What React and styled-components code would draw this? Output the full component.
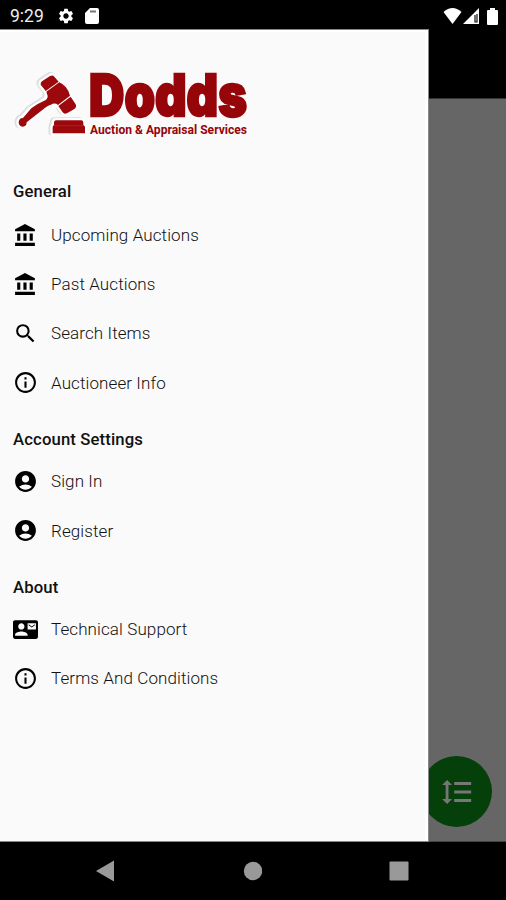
import React from 'react'
import styled, { createGlobalStyle } from 'styled-components'
import {
    MdSearch,
    MdInfoOutline,
    MdAccountCircle,
    MdContactMail,
    MdFormatLineSpacing,
    MdSettings
} from 'react-icons/md'

const GlobalStyle = createGlobalStyle`
    * {
        box-sizing: border-box;
    }
    body {
        margin: 0;
        background-color: #000;
        font-family: Roboto, "Liberation Sans", sans-serif;
    }
`

const Phone = styled.div`
    display: flex;
    flex-direction: column;
    width: 506px;
    height: 900px;
    overflow: hidden;
    background-color: #000;
`

const StatusBar = styled.header`
    display: flex;
    align-items: center;
    height: 29px;
    padding: 3px 8px 0 10px;
    color: #fff;
`

const Clock = styled.span`
    width: 47px;
    font-size: 17.5px;
    line-height: 20px;
    color: #eee;
`

const StatusIcons = styled.div`
    display: flex;
    align-items: center;
    gap: ${props => props.gap};
    margin-left: ${props => props.right ? 'auto' : '0'};
`

const Content = styled.main`
    display: flex;
    height: 813px;
`

const Drawer = styled.nav`
    width: 429px;
    padding: 32px 13px 0;
    background-color: #fafafa;
    border: 1px solid #888;
    border-left: none;
    box-shadow: inset -3px 2px 0 #fff;
`

const Logo = styled.svg`
    display: block;
    width: 240px;
    height: 82px;
    margin-bottom: 17px;
    overflow: visible;
`

const SectionTitle = styled.h2`
    height: 49.5px;
    margin: 0;
    padding-top: ${props => props.first ? '21px' : '22.4px'};
    font-size: 16.7px;
    font-weight: 500;
    line-height: 20px;
    letter-spacing: 0.13px;
    color: #111;
`

const MenuItem = styled.a`
    display: flex;
    align-items: center;
    gap: 13px;
    height: 49.2px;
    font-size: 17px;
    font-weight: 300;
    letter-spacing: 0.1px;
    color: #111;
    svg {
        color: #000;
    }
`

const Backdrop = styled.section`
    position: relative;
    flex: 1;
    background-color: #666;
    border-bottom: 1px solid #444;
`

const AppBar = styled.div`
    height: 70px;
    background-color: #000;
    border-bottom: 1px solid #333;
`

const FabClip = styled.div`
    position: absolute;
    right: 0;
    bottom: 14px;
    width: 77px;
    height: 71px;
    overflow: hidden;
`

const Fab = styled.button`
    position: absolute;
    right: 14px;
    top: 0;
    display: flex;
    align-items: center;
    justify-content: center;
    width: 71px;
    height: 71px;
    padding: 0;
    border: none;
    border-radius: 50%;
    background-color: #053f09;
    color: #777;
`

const NavBar = styled.footer`
    display: flex;
    justify-content: space-between;
    align-items: center;
    height: 58px;
    padding: 0 97px 0 96px;
`

const BankIcon = () => (
    <svg width="25" height="25" viewBox="0 0 24 24" fill="currentColor">
        <path d="M4 10v7h3v-7H4zm6 0v7h3v-7h-3zM2 22h19v-3H2v3zm14-12v7h3v-7h-3zm-4.5-9L2 6v2h19V6l-9.5-5z" />
    </svg>
)

const sections = [
    {
        title: 'General',
        items: [
            { label: 'Upcoming Auctions', Icon: BankIcon },
            { label: 'Past Auctions', Icon: BankIcon },
            { label: 'Search Items', Icon: MdSearch },
            { label: 'Auctioneer Info', Icon: MdInfoOutline }
        ]
    },
    {
        title: 'Account Settings',
        items: [
            { label: 'Sign In', Icon: MdAccountCircle },
            { label: 'Register', Icon: MdAccountCircle }
        ]
    },
    {
        title: 'About',
        items: [
            { label: 'Technical Support', Icon: MdContactMail },
            { label: 'Terms And Conditions', Icon: MdInfoOutline }
        ]
    }
]

const gavelOutline = 'M92 62Q91 56 96 52L119 37Q128 31 133 38L145 53L172 74L182 97L197 121Q201 130 192 136L172 147Q163 152 158 145L145 125L120 122L98 136L50 175Q48 188 38 188Q26 188 26 175Q27 164 38 160L62 134L108 105L112 88Z'
const blockOutline = 'M138 169H214Q219 169 220 175V184Q225 185 225 190V208H128V190Q128 185 132 184V175Q133 169 138 169Z'

const Gavel = () => (
    <g transform="translate(-3 2) scale(0.3333)">
        <g fill="#dadede" stroke="#dadede" strokeWidth="15" strokeLinejoin="round" transform="translate(-5 -2)">
            <path d={gavelOutline} />
            <path d={blockOutline} />
        </g>
        <g fill="#fff" stroke="#fff" strokeWidth="14" strokeLinejoin="round">
            <path d={gavelOutline} />
            <path d={blockOutline} />
        </g>
        <g fill="#9d080d">
            <path d="M92 62Q91 56 96 52L119 37Q128 31 133 38L146 53L107 81Z" />
            <path d="M109 83L148 55Q173 66 180 95L144 123Q134 115 123 122Q114 123 98 137L50 175Q50 188 38 188Q26 187 26 175Q27 162 39 162L64 133Q82 119 100 112Q114 106 113 96Z" />
            <path d="M145 126L182 98L197 121Q201 130 192 136L172 147Q163 152 158 145Z" />
            <path d="M138 169H214Q219 169 220 175V184Q225 185 225 190V208H128V190Q128 185 132 184V175Q133 169 138 169Z" />
        </g>
        <path d="M131 185H221" stroke="#b42a2e" strokeWidth="2" />
    </g>
)

class App extends React.Component {
    render() {
        return (
            <Phone>
                <GlobalStyle />
                <StatusBar>
                    <Clock>9:29</Clock>
                    <StatusIcons gap="10px">
                        <MdSettings size={18} />
                        <svg width="14" height="16" viewBox="0 0 14 16">
                            <path d="M5 0H12Q14 0 14 2V14Q14 16 12 16H2Q0 16 0 14V5Z" fill="#fff" />
                            <path d="M5 2.5H11V4.5H5Z" fill="#777" />
                        </svg>
                    </StatusIcons>
                    <StatusIcons gap="1px" right>
                        <svg width="19" height="16" viewBox="0 0 19 16">
                            <path d="M0.5 4Q9.5 -4 18.5 4L9.5 16Z" fill="#fff" />
                        </svg>
                        <svg width="23" height="16" viewBox="0 0 23 16">
                            <path d="M16 0V16H0Z" fill="#fff" />
                            <path d="M12 7V14H14V6" fill="none" stroke="#111" strokeWidth="1.2" />
                        </svg>
                        <svg width="11" height="17" viewBox="0 0 11 17">
                            <path d="M3 2V0H8V2H10Q11 2 11 3V16Q11 17 10 17H1Q0 17 0 16V3Q0 2 1 2Z" fill="#fff" />
                        </svg>
                    </StatusIcons>
                </StatusBar>
                <Content>
                    <Drawer>
                        <Logo viewBox="0 0 240 82" role="img">
                            <Gavel />
                            <g fill="#960509" stroke="#960509">
                                <text x="76" y="54" fontFamily="Inter, sans-serif" fontSize="57.5" fontWeight="900" strokeWidth="2.4" textLength="158" lengthAdjust="spacingAndGlyphs">Dodds</text>
                                <text x="77" y="72" fontFamily="Roboto, sans-serif" fontSize="12.8" fontWeight="700" stroke="none" textLength="157" lengthAdjust="spacingAndGlyphs">Auction &amp; Appraisal Services</text>
                            </g>
                        </Logo>
                        {sections.map(({ title, items }, index) => (
                            <React.Fragment key={title}>
                                <SectionTitle first={index === 0}>{title}</SectionTitle>
                                {items.map(({ label, Icon }) => (
                                    <MenuItem key={label}>
                                        <Icon size={25} />
                                        <span>{label}</span>
                                    </MenuItem>
                                ))}
                            </React.Fragment>
                        ))}
                    </Drawer>
                    <Backdrop>
                        <AppBar />
                        <FabClip>
                            <Fab>
                                <MdFormatLineSpacing size={34} />
                            </Fab>
                        </FabClip>
                    </Backdrop>
                </Content>
                <NavBar>
                    <svg width="19" height="22" viewBox="0 0 19 22">
                        <path d="M0 11L18 0.5V21.5Z" fill="#999" />
                    </svg>
                    <svg width="19" height="20" viewBox="0 0 19 20">
                        <circle cx="10" cy="10" r="9.2" fill="#999" />
                    </svg>
                    <svg width="20" height="20" viewBox="0 0 20 20">
                        <rect x="0.5" y="0.5" width="19" height="19" rx="1" fill="#999" />
                    </svg>
                </NavBar>
            </Phone>
        )
    }
}

export default App
